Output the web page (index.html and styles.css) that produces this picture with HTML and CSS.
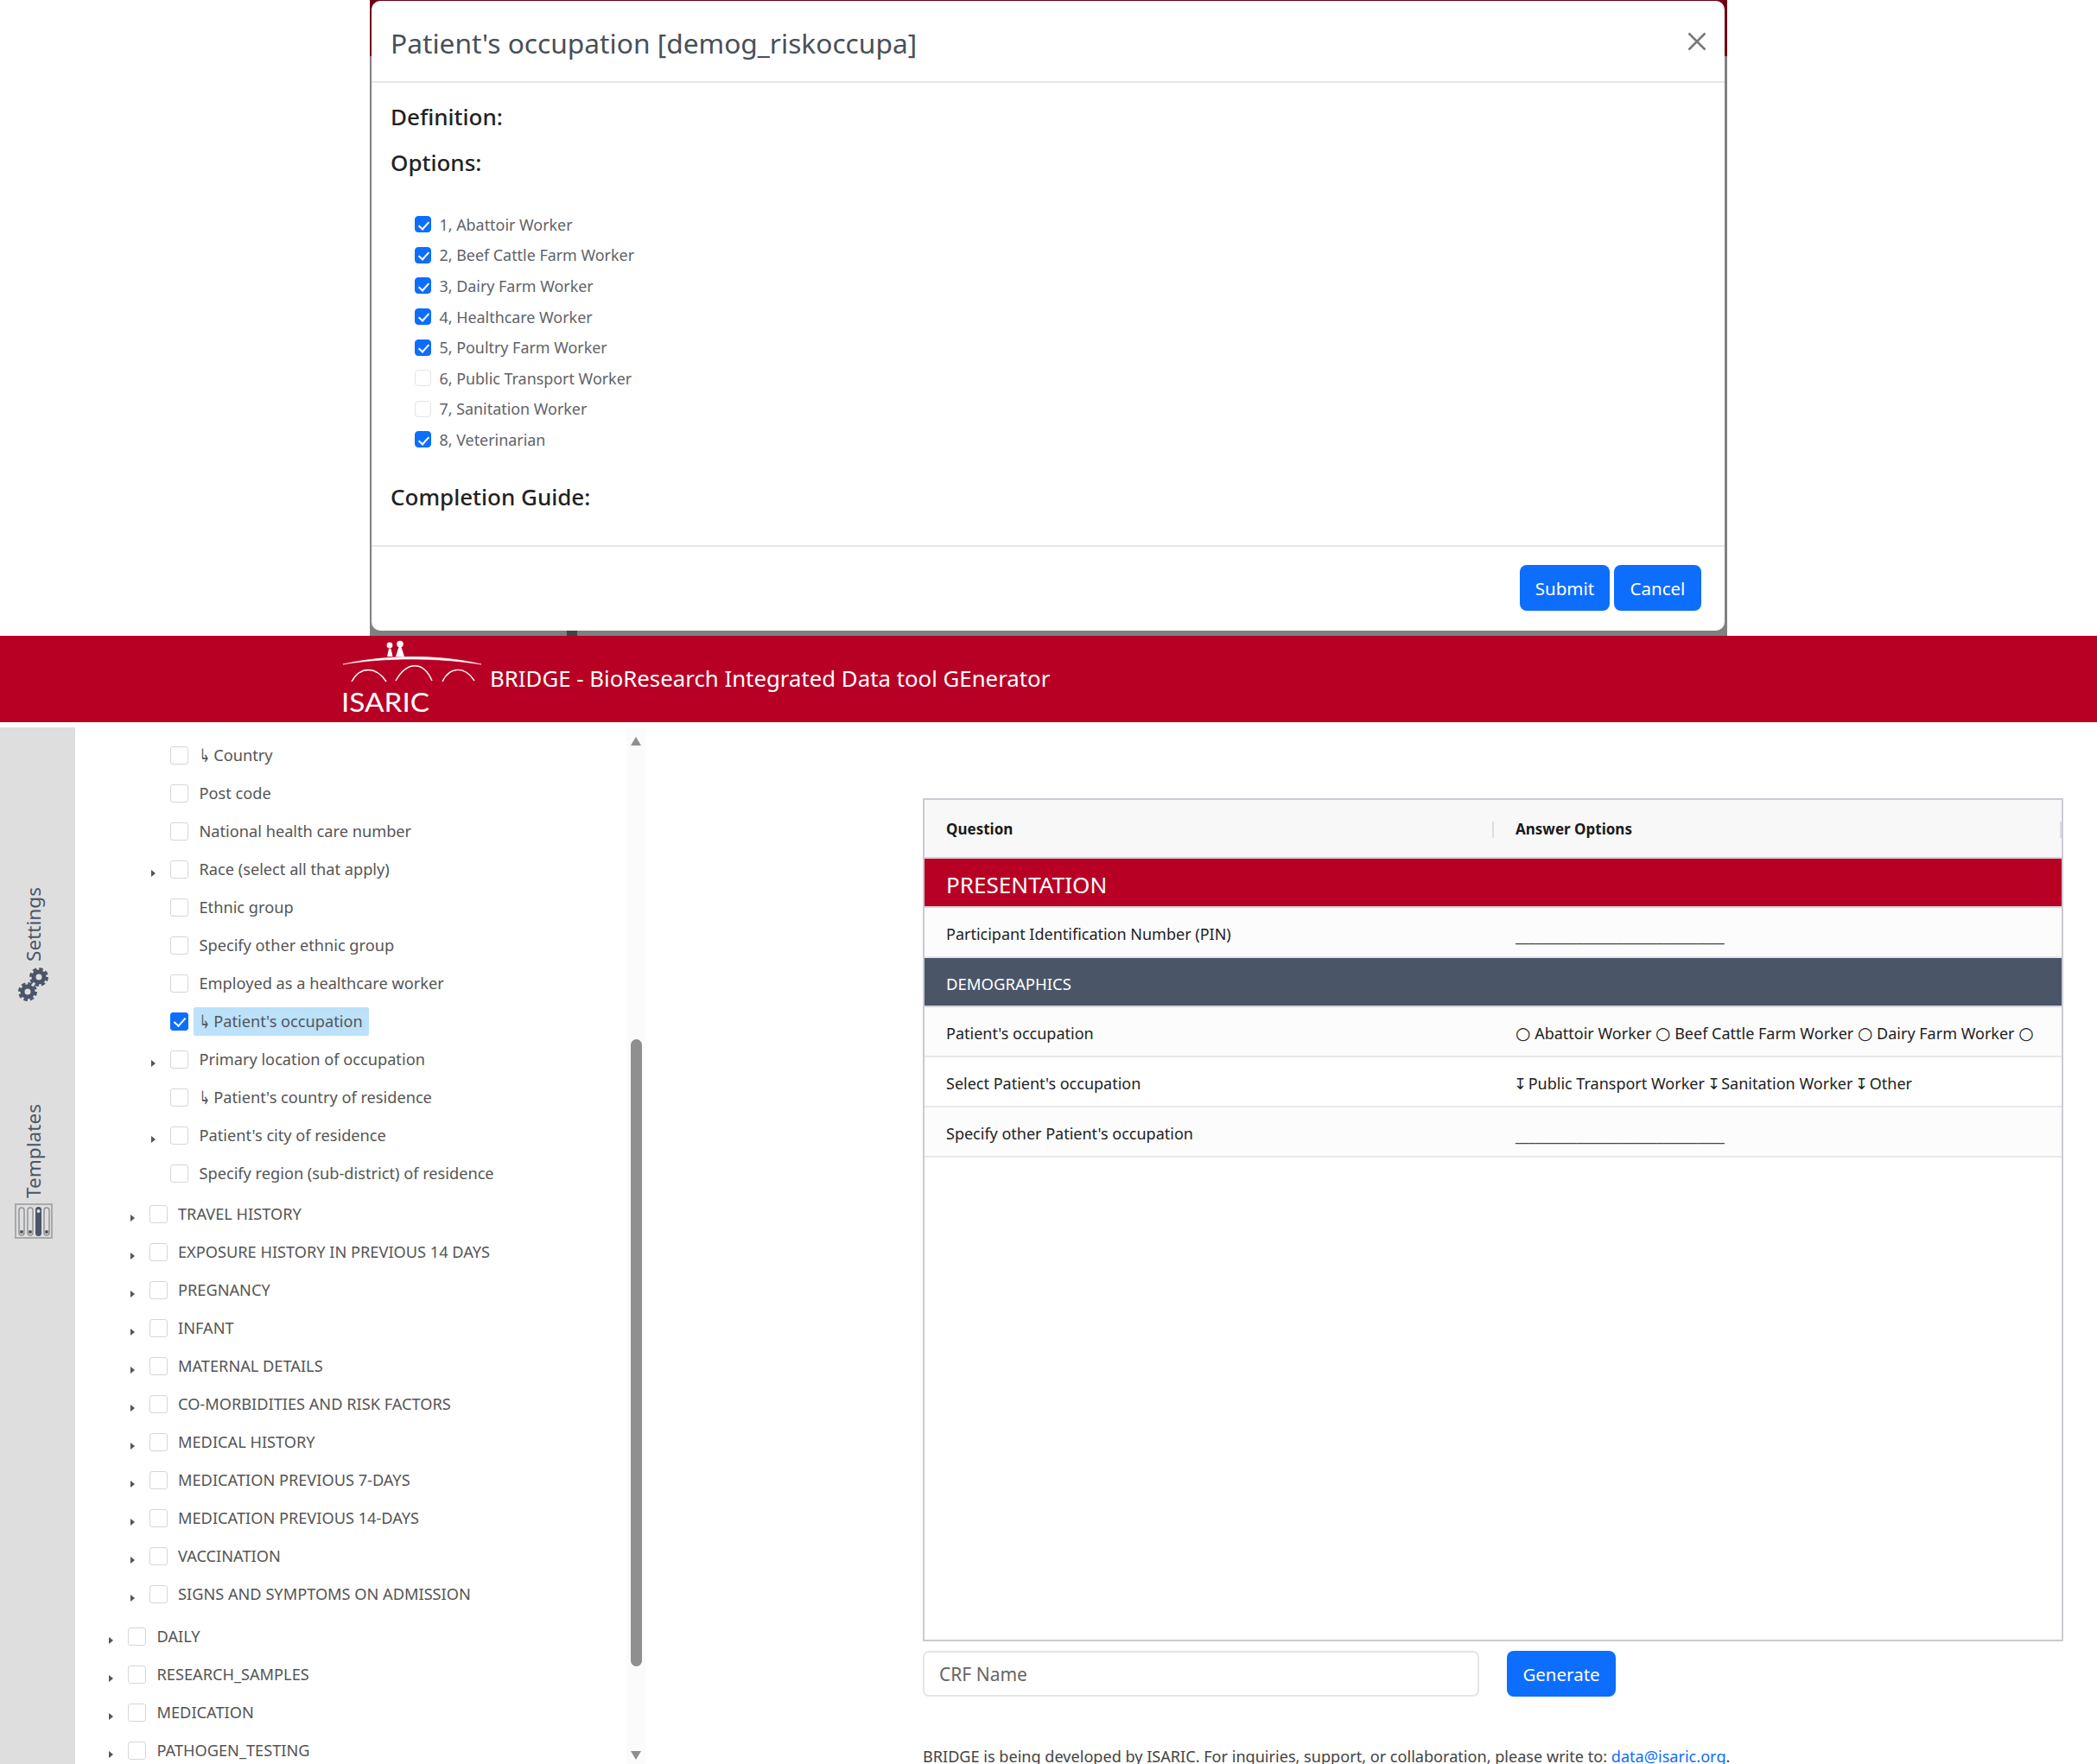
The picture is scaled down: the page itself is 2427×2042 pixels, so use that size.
FILE: index.html
```html
<!DOCTYPE html>
<html lang="en">
<head>
    <meta charset="UTF-8">
    <meta name="viewport" content="width=device-width, initial-scale=1.0">
    <title>BRIDGE - BioResearch Integrated Data tool GEnerator</title>
    <link rel="stylesheet" href="styles.css">
</head>
<body>
    <!-- modal shot on top of the page -->
    <section class="modal-shot">
        <div class="modal">
            <div class="modal-header">
                <h4 class="modal-title">Patient's occupation [demog_riskoccupa]</h4>
                <svg class="modal-close" width="22" height="22" viewBox="0 0 22 22"><path d="M1.5 1.5l19 19M20.5 1.5l-19 19"/></svg>
            </div>
            <div class="modal-body">
                <h5 class="modal-heading">Definition:</h5>
                <h5 class="modal-heading">Options:</h5>
                <ul class="option-list">
                    <li class="option"><span class="check check-small on"></span>1, Abattoir Worker</li>
                    <li class="option"><span class="check check-small on"></span>2, Beef Cattle Farm Worker</li>
                    <li class="option"><span class="check check-small on"></span>3, Dairy Farm Worker</li>
                    <li class="option"><span class="check check-small on"></span>4, Healthcare Worker</li>
                    <li class="option"><span class="check check-small on"></span>5, Poultry Farm Worker</li>
                    <li class="option"><span class="check check-small"></span>6, Public Transport Worker</li>
                    <li class="option"><span class="check check-small"></span>7, Sanitation Worker</li>
                    <li class="option"><span class="check check-small on"></span>8, Veterinarian</li>
                </ul>
                <h5 class="modal-heading completion">Completion Guide:</h5>
            </div>
            <div class="modal-footer">
                <button class="btn btn-submit">Submit</button>
                <button class="btn btn-cancel">Cancel</button>
            </div>
        </div>
    </section>

    <header class="topbar">
        <svg class="logo" width="165" height="92" viewBox="0 0 165 92">
            <circle cx="56" cy="7" r="3.4" fill="#fff"/>
            <circle cx="68" cy="5.5" r="3.8" fill="#fff"/>
            <path d="M53 20l2-9h2.500l2 9zM63 20l3.500-11h3l3.500 11z" fill="#fff"/>
            <path d="M2 29C50 18 112 17 162 29C112 21 50 21 2 29z" fill="#fff" stroke="#fff" stroke-width=".6"/>
            <g fill="none" stroke="#fff" stroke-width="1.400">
                <path d="M12 49C22 31 40 31 52 49"/>
                <path d="M63 48C76 25 95 25 105 48"/>
                <path d="M117 49C126 31 143 31 154 48"/>
            </g>
            <text class="logo-text" x="0" y="84" textLength="102" lengthAdjust="spacingAndGlyphs">ISARIC</text>
        </svg>
        <span class="topbar-title">BRIDGE - BioResearch Integrated Data tool GEnerator</span>
    </header>

    <main class="layout">
        <nav class="rail">
            <div class="rail-item rail-settings">
                <span class="rail-label">Settings</span>
                <svg class="rail-icon" width="36" height="42" viewBox="0 0 36 42">
                    <g fill="none" stroke="#4a5568">
                        <circle cx="24" cy="12" r="6" stroke-width="5"/>
                        <circle cx="24" cy="12" r="9.500" stroke-width="3" stroke-dasharray="4.500 2.960"/>
                        <circle cx="11" cy="29" r="6" stroke-width="5"/>
                        <circle cx="11" cy="29" r="9.500" stroke-width="3" stroke-dasharray="4.500 2.960"/>
                    </g>
                </svg>
            </div>
            <div class="rail-item rail-templates">
                <span class="rail-label">Templates</span>
                <svg class="rail-icon" width="44" height="41" viewBox="0 0 44 41">
                    <rect x="1" y="1" width="42" height="39" fill="none" stroke="#a9a9a9" stroke-width="2"/>
                    <g fill="none" stroke="#8d9096" stroke-width="1.400">
                        <rect x="5" y="5" width="6" height="32" rx="3"/>
                        <rect x="15" y="5" width="6" height="32" rx="3"/>
                        <rect x="34" y="5" width="6" height="32" rx="3"/>
                    </g>
                    <rect x="24" y="4" width="7" height="34" rx="3.500" fill="#4a5568"/>
                    <g fill="#555">
                        <circle cx="8" cy="33" r="2"/>
                        <circle cx="18" cy="33" r="2"/>
                        <circle cx="37" cy="33" r="2"/>
                    </g>
                    <circle cx="27.500" cy="9" r="2" fill="#ddd"/>
                </svg>
            </div>
        </nav>

        <div class="tree-panel">
            <ul class="tree">
                <li class="row l3"><span class="arrow none"></span><span class="check"></span><span class="label"><span class="sub">↳</span> Country</span></li>
                <li class="row l3"><span class="arrow none"></span><span class="check"></span><span class="label">Post code</span></li>
                <li class="row l3"><span class="arrow none"></span><span class="check"></span><span class="label">National health care number</span></li>
                <li class="row l3"><span class="arrow"></span><span class="check"></span><span class="label">Race (select all that apply)</span></li>
                <li class="row l3"><span class="arrow none"></span><span class="check"></span><span class="label">Ethnic group</span></li>
                <li class="row l3"><span class="arrow none"></span><span class="check"></span><span class="label">Specify other ethnic group</span></li>
                <li class="row l3"><span class="arrow none"></span><span class="check"></span><span class="label">Employed as a healthcare worker</span></li>
                <li class="row l3"><span class="arrow none"></span><span class="check on"></span><span class="label selected"><span class="sub">↳</span> Patient's occupation</span></li>
                <li class="row l3"><span class="arrow"></span><span class="check"></span><span class="label">Primary location of occupation</span></li>
                <li class="row l3"><span class="arrow none"></span><span class="check"></span><span class="label"><span class="sub">↳</span> Patient's country of residence</span></li>
                <li class="row l3"><span class="arrow"></span><span class="check"></span><span class="label">Patient's city of residence</span></li>
                <li class="row l3"><span class="arrow none"></span><span class="check"></span><span class="label">Specify region (sub-district) of residence</span></li>
                <li class="row l2 first-l2"><span class="arrow"></span><span class="check"></span><span class="label">TRAVEL HISTORY</span></li>
                <li class="row l2"><span class="arrow"></span><span class="check"></span><span class="label">EXPOSURE HISTORY IN PREVIOUS 14 DAYS</span></li>
                <li class="row l2"><span class="arrow"></span><span class="check"></span><span class="label">PREGNANCY</span></li>
                <li class="row l2"><span class="arrow"></span><span class="check"></span><span class="label">INFANT</span></li>
                <li class="row l2"><span class="arrow"></span><span class="check"></span><span class="label">MATERNAL DETAILS</span></li>
                <li class="row l2"><span class="arrow"></span><span class="check"></span><span class="label">CO-MORBIDITIES AND RISK FACTORS</span></li>
                <li class="row l2"><span class="arrow"></span><span class="check"></span><span class="label">MEDICAL HISTORY</span></li>
                <li class="row l2"><span class="arrow"></span><span class="check"></span><span class="label">MEDICATION PREVIOUS 7-DAYS</span></li>
                <li class="row l2"><span class="arrow"></span><span class="check"></span><span class="label">MEDICATION PREVIOUS 14-DAYS</span></li>
                <li class="row l2"><span class="arrow"></span><span class="check"></span><span class="label">VACCINATION</span></li>
                <li class="row l2"><span class="arrow"></span><span class="check"></span><span class="label">SIGNS AND SYMPTOMS ON ADMISSION</span></li>
                <li class="row l1 first-l1"><span class="arrow"></span><span class="check"></span><span class="label">DAILY</span></li>
                <li class="row l1"><span class="arrow"></span><span class="check"></span><span class="label">RESEARCH_SAMPLES</span></li>
                <li class="row l1"><span class="arrow"></span><span class="check"></span><span class="label">MEDICATION</span></li>
                <li class="row l1"><span class="arrow"></span><span class="check"></span><span class="label">PATHOGEN_TESTING</span></li>
            </ul>
            <div class="scrollbar">
                <span class="scroll-up"></span>
                <span class="scroll-thumb"></span>
                <span class="scroll-down"></span>
            </div>
        </div>

        <div class="content">
            <div class="table-box">
                <table class="crf-table">
                    <thead>
                        <tr>
                            <th><span class="th-text">Question</span></th>
                            <th><span class="th-sep"></span><span class="th-text">Answer Options</span><span class="th-sep th-sep-end"></span></th>
                        </tr>
                    </thead>
                    <tbody>
                        <tr class="band-red"><td colspan="2">PRESENTATION</td></tr>
                        <tr class="tint"><td>Participant Identification Number (PIN)</td><td class="blank">_______________________________</td></tr>
                        <tr class="band-dark"><td colspan="2">DEMOGRAPHICS</td></tr>
                        <tr class="tint"><td>Patient's occupation</td><td><span class="mark-radio">○</span> Abattoir Worker <span class="mark-radio">○</span> Beef Cattle Farm Worker <span class="mark-radio">○</span> Dairy Farm Worker <span class="mark-radio">○</span></td></tr>
                        <tr><td>Select Patient's occupation</td><td><span class="mark-drop">↧</span> Public Transport Worker <span class="mark-drop">↧</span> Sanitation Worker <span class="mark-drop">↧</span> Other</td></tr>
                        <tr class="tint"><td>Specify other Patient's occupation</td><td class="blank">_______________________________</td></tr>
                    </tbody>
                </table>
            </div>
            <div class="crf-form">
                <input class="crf-input" type="text" placeholder="CRF Name">
                <button class="btn btn-generate">Generate</button>
            </div>
            <p class="note">BRIDGE is being developed by ISARIC. For inquiries, support, or collaboration, please write to: <a href="#">data@isaric.org</a>.</p>
        </div>
    </main>
</body>
</html>
```

FILE: styles.css
```css
* {
    box-sizing: border-box;
}

html, body {
    margin: 0;
    padding: 0;
    height: 2042px;
    overflow: hidden;
    background-color: #fff;
}

body {
    font-family: "Noto Sans", "Open Sans", sans-serif;
    color: #222;
}

ul {
    list-style: none;
    margin: 0;
    padding: 0;
}

/* checkboxes */
.check {
    position: relative;
    flex: none;
    display: block;
    width: 21px;
    height: 21px;
    border: 1.500px solid #d4d6d9;
    border-radius: 3px;
    background-color: #fff;
}

.check-small {
    width: 19px;
    height: 19px;
    border-radius: 4px;
    border-color: #e2e4e7;
}

.check.on {
    background-color: #0d6efd;
    border-color: #0d6efd;
}

.check.on::after {
    content: "";
    position: absolute;
    left: 33%;
    top: 14%;
    width: 32%;
    height: 58%;
    border: solid #fff;
    border-width: 0 2.500px 2.500px 0;
    transform: rotate(42deg);
}

/* buttons */
.btn {
    border: 0;
    border-radius: 8px;
    background-color: #0d6efd;
    color: #fff;
    font-family: inherit;
    font-size: 20.500px;
    padding: 0;
}

/* modal */
.modal-shot {
    width: 1571px;
    height: 736px;
    margin-left: 428px;
    padding: 1px 3px 6px 2px;
    background:
        linear-gradient(#6e0015, #6e0015) top / 100% 65px no-repeat,
        linear-gradient(#444, #444) 228px bottom / 12px 8px no-repeat,
        #808080;
}

.modal {
    display: flex;
    flex-direction: column;
    height: 100%;
    background-color: #fff;
    border-radius: 10px;
}

.modal-header {
    display: flex;
    align-items: center;
    justify-content: space-between;
    height: 95px;
    padding: 1px 21px 1px 22px;
    border-bottom: 2px solid #e4e6ea;
}

.modal-title {
    margin: 4px 0 0;
    font-size: 31.700px;
    font-weight: 400;
    color: #495057;
}

.modal-close path {
    fill: none;
    stroke: #777;
    stroke-width: 2.500;
}

.modal-body {
    flex: 1;
    padding: 22px 22px 0;
}

.modal-heading {
    margin: 0 0 19px;
    height: 34px;
    line-height: 34px;
    font-size: 26px;
    font-weight: 500;
    color: #222;
}

.modal-heading.completion {
    margin-top: 31px;
}

.option-list {
    margin: 37px 0 0 28px;
}

.option {
    display: flex;
    align-items: center;
    gap: 9.500px;
    height: 35.600px;
    font-size: 17.900px;
    color: #5f6368;
}

.modal-footer {
    display: flex;
    justify-content: flex-end;
    gap: 5px;
    height: 99px;
    padding: 21px 27px 0 0;
    border-top: 2px solid #e4e6ea;
}

.btn-submit {
    width: 104px;
    height: 53px;
}

.btn-cancel {
    width: 101px;
    height: 53px;
}

/* red bar */
.topbar {
    display: flex;
    height: 100px;
    padding: 4px 0 0 395px;
    background-color: #b80025;
    color: #fff;
}

.logo {
    flex: none;
}

.logo-text {
    font-family: "Lato", sans-serif;
    font-size: 31px;
    fill: #fff;
}

.topbar-title {
    margin: 27px 0 0 7px;
    font-size: 25.800px;
    line-height: 36px;
}

/* page under the bar */
.layout {
    display: flex;
    height: 1200px;
    margin-top: 6px;
    overflow: hidden;
}

.rail {
    flex: none;
    width: 87px;
    padding: 185px 9px 0 0;
    background-color: #dedede;
    color: #4a5568;
}

.rail-item {
    display: flex;
    flex-direction: column;
    align-items: center;
    gap: 6px;
}

.rail-templates {
    margin-top: 117px;
}

.rail-label {
    writing-mode: vertical-rl;
    transform: rotate(180deg);
    font-size: 22.600px;
    line-height: 30px;
}

.tree-panel {
    flex: none;
    display: flex;
    width: 660px;
}

.tree {
    flex: 1;
    padding-top: 10px;
}

.row {
    display: flex;
    align-items: center;
    height: 44px;
    font-size: 18.200px;
    color: #555;
    white-space: nowrap;
}

.l3 {
    padding-left: 88px;
}

.l2 {
    padding-left: 63.500px;
}

.l1 {
    padding-left: 39px;
}

.first-l2 {
    margin-top: 3px;
}

.first-l1 {
    margin-top: 5px;
}

.arrow {
    flex: none;
    width: 0;
    height: 0;
    margin: 9px 17px 0 0;
    border: solid transparent;
    border-width: 4px 0 4px 5px;
    border-left-color: #555;
}

.arrow.none {
    border-left-color: transparent;
}

.label {
    margin-left: 12.500px;
}

.label.selected {
    margin-left: 5.500px;
    padding: 0 7px;
    height: 33px;
    line-height: 33px;
    border-radius: 2px;
    background-color: #bbe1fb;
}

.sub {
    display: inline-block;
    width: 12px;
    font-family: "DejaVu Sans", sans-serif;
    font-size: 18px;
    line-height: 1;
    transform: scale(.8, 1.2);
    transform-origin: left center;
}

.scrollbar {
    flex: none;
    width: 22px;
    padding-top: 11px;
    background-color: #fbfbfb;
}

.scrollbar span {
    display: block;
}

.scroll-up, .scroll-down {
    width: 0;
    height: 0;
    margin-left: 5px;
    border: solid transparent;
    border-width: 0 6.500px 10px;
    border-bottom-color: #8f8f8f;
}

.scroll-down {
    margin-top: 98px;
    border-width: 10px 6.500px 0;
    border-top-color: #8f8f8f;
    border-bottom-color: transparent;
}

.scroll-thumb {
    width: 13px;
    height: 726px;
    margin: 340px 0 0 5px;
    border-radius: 7px;
    background-color: #8f8f8f;
}

/* table side */
.content {
    flex: none;
    width: 1320px;
    margin-left: 321px;
    padding-top: 82px;
}

.table-box {
    height: 976px;
    border: 2px solid #c9ccd2;
}

.crf-table {
    width: 100%;
    table-layout: fixed;
    border-collapse: collapse;
    font-size: 18px;
}

.crf-table th:first-child,
.crf-table td:first-child {
    width: 659px;
}

.crf-table th {
    position: relative;
    height: 67px;
    padding: 0 0 0 25px;
    text-align: left;
    font-weight: 700;
    font-size: 17px;
    color: #1b1b1b;
    background-color: #f8f8f8;
    border-bottom: 2px solid #d4d6da;
}

.th-sep {
    position: absolute;
    left: -2px;
    top: 25px;
    height: 19px;
    border-left: 2px solid #dcdde0;
}

.th-sep-end {
    left: auto;
    right: 0;
}

.crf-table td {
    height: 58px;
    padding: 3px 0 0 25px;
    white-space: nowrap;
    overflow: hidden;
    border-bottom: 2px solid #e8e9ec;
    color: #222;
}

.tint td {
    background-color: #fcfcfc;
}

.crf-table .band-red td {
    height: 57px;
    padding-top: 4px;
    font-size: 26.100px;
    color: #fff;
    background-color: #b80025;
    border-bottom-color: #d4d6da;
}

.crf-table .band-dark td {
    height: 57px;
    font-size: 18.500px;
    color: #fff;
    background-color: #4a5568;
    border-bottom-color: #d4d6da;
}

.crf-table .blank {
    padding-top: 8px;
    color: #444;
    letter-spacing: -.2px;
}

.mark-radio {
    font-family: "DejaVu Sans", sans-serif;
    font-size: 20px;
    line-height: 1;
}

.mark-drop {
    display: inline-block;
    width: 10px;
    text-indent: -2px;
    line-height: 1;
}

.crf-form {
    display: flex;
    gap: 32px;
    margin-top: 11px;
}

.crf-input {
    width: 644px;
    height: 53px;
    padding: 0 17px;
    border: 2px solid #e3e5e8;
    border-radius: 7px;
    font-family: inherit;
    font-size: 21px;
    color: #444;
}

.crf-input::placeholder {
    color: #666;
    opacity: 1;
}

.btn-generate {
    width: 126px;
    height: 53px;
}

.note {
    margin: 60px 0 0;
    font-size: 18.100px;
    line-height: 18px;
    color: #444;
    white-space: nowrap;
}

.note a {
    color: #0d6efd;
    text-decoration: none;
}
```
